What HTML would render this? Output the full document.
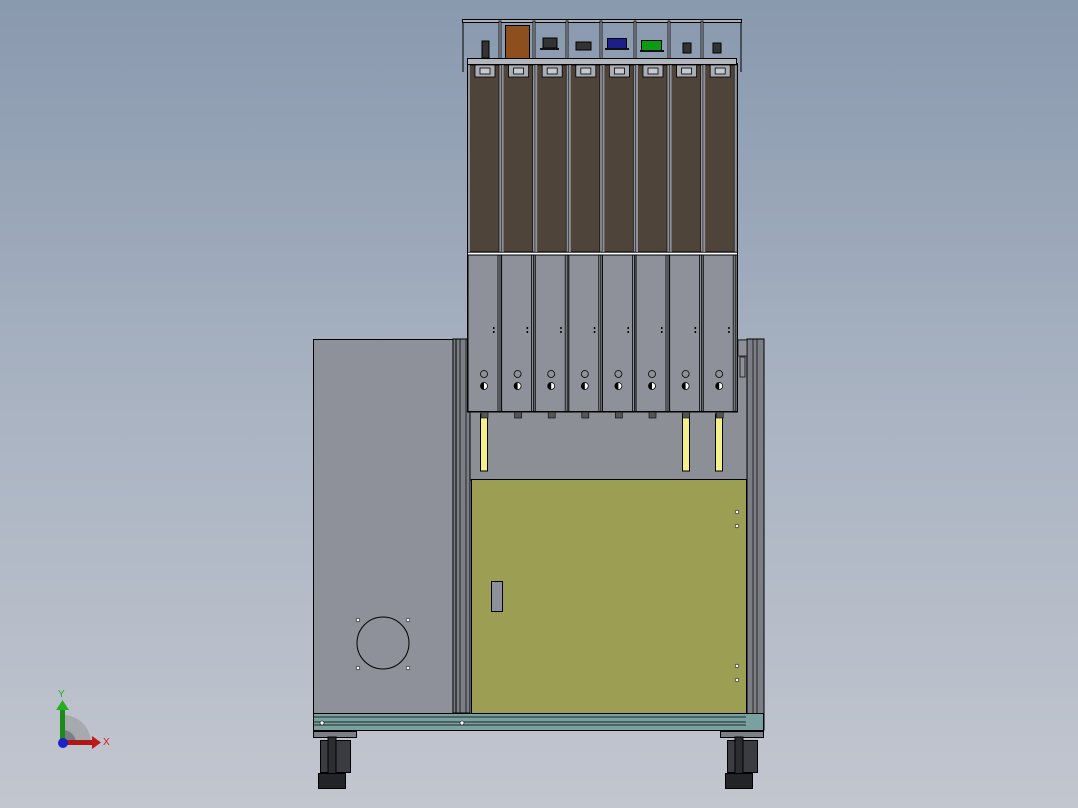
<!DOCTYPE html>
<html><head><meta charset="utf-8"><style>
html,body{margin:0;padding:0}
body{width:1078px;height:808px;overflow:hidden;background:linear-gradient(#8999ae 0%,#a9b3c2 50%,#c2c6cf 100%);font-family:"Liberation Sans",sans-serif}
svg{position:absolute;left:0;top:0}
</style></head><body>
<svg width="1078" height="808" viewBox="0 0 1078 808">
<defs>
<g id="col">
 <rect x="0" y="65" width="34" height="187" fill="#4e4439" stroke="#000" stroke-width="1"/>
 <rect x="0" y="65" width="2" height="187" fill="#8e9199"/>
 <rect x="31" y="65" width="3" height="187" fill="#8e9199" stroke="#000" stroke-width="0.6"/>
 <rect x="7" y="65" width="20" height="12" fill="#a9adb4" stroke="#000" stroke-width="0.8"/>
 <rect x="12" y="68" width="10" height="6" fill="#c6c9ce" stroke="#000" stroke-width="0.8"/>
 <rect x="0" y="255" width="34" height="157" fill="#8e9199" stroke="#000" stroke-width="1"/>
 <line x1="30" y1="255" x2="30" y2="412" stroke="#000" stroke-width="0.8"/>
 <line x1="32" y1="255" x2="32" y2="412" stroke="#000" stroke-width="0.8"/>
 <circle cx="16" cy="374" r="3.5" fill="none" stroke="#000" stroke-width="0.8"/>
 <circle cx="16" cy="386" r="3.5" fill="#fff" stroke="#000" stroke-width="0.8"/>
 <path d="M16 382.5 v7 a3.5 3.5 0 0 1 0 -7z" fill="#000"/>
 <rect x="25" y="327" width="1.5" height="2" fill="#000"/><rect x="25" y="331" width="1.5" height="2" fill="#000"/>
 <rect x="13" y="412" width="7" height="6" fill="#555" stroke="#000" stroke-width="0.6"/>
</g>
</defs>
<!-- left cabinet -->
<rect x="313.5" y="339.5" width="140" height="374" fill="#8e9199" stroke="#000"/>
<circle cx="383" cy="643" r="26" fill="none" stroke="#000"/>
<circle cx="358" cy="620" r="1.8" fill="#fff" stroke="#000" stroke-width=".6"/>
<circle cx="408" cy="620" r="1.8" fill="#fff" stroke="#000" stroke-width=".6"/>
<circle cx="358" cy="668" r="1.8" fill="#fff" stroke="#000" stroke-width=".6"/>
<circle cx="408" cy="668" r="1.8" fill="#fff" stroke="#000" stroke-width=".6"/>
<!-- left post -->
<rect x="453" y="339" width="17" height="374" fill="#7b7e84" stroke="#000"/>
<line x1="456" y1="339" x2="456" y2="713" stroke="#000"/>
<line x1="460" y1="339" x2="460" y2="713" stroke="#000" stroke-width=".7"/>
<line x1="466" y1="339" x2="466" y2="713" stroke="#000" stroke-width=".7"/>
<!-- gray back panel -->
<rect x="470" y="340" width="277" height="140" fill="#8c8f96" stroke="#000"/>
<!-- olive panel -->
<rect x="471.5" y="479.5" width="275" height="234" fill="#9c9e54" stroke="#000"/>
<rect x="491.5" y="581.5" width="11" height="30" fill="#8e9199" stroke="#000"/>
<circle cx="737" cy="512" r="1.8" fill="#fff" stroke="#000" stroke-width=".6"/>
<circle cx="737" cy="526" r="1.8" fill="#fff" stroke="#000" stroke-width=".6"/>
<circle cx="737" cy="666" r="1.8" fill="#fff" stroke="#000" stroke-width=".6"/>
<circle cx="737" cy="680" r="1.8" fill="#fff" stroke="#000" stroke-width=".6"/>
<!-- right post -->
<rect x="747" y="339" width="17" height="391" fill="#7b7e84" stroke="#000"/>
<line x1="753" y1="339" x2="753" y2="730" stroke="#000" stroke-width=".7"/>
<line x1="757" y1="339" x2="757" y2="730" stroke="#000" stroke-width=".7"/>
<rect x="738" y="340" width="9" height="16" fill="#8e9199" stroke="#000" stroke-width=".7"/>
<rect x="740" y="357" width="5" height="20" fill="#8e9199" stroke="#000" stroke-width=".7"/>
<!-- yellow rods -->
<g fill="#f4f08a" stroke="#000">
<rect x="480.5" y="414" width="7" height="57"/>
<rect x="682.5" y="414" width="7" height="57"/>
<rect x="715.5" y="414" width="7" height="57"/>
</g>
<!-- columns -->
<rect x="468" y="253" width="269" height="2" fill="#fff"/>
<rect x="467.5" y="252" width="270" height="160" fill="none" stroke="#000"/>
<use href="#col" x="468"/><use href="#col" x="501.6"/><use href="#col" x="535.2"/><use href="#col" x="568.8"/>
<use href="#col" x="602.4"/><use href="#col" x="636"/><use href="#col" x="669.6"/><use href="#col" x="703.2"/>
<rect x="467.5" y="63.5" width="270" height="348" fill="none" stroke="#000"/>
<!-- top rail -->
<g fill="none" stroke="#000" stroke-width="1">
<path d="M463 72 V20 H741 V72"/>
<rect x="462.5" y="19.5" width="279" height="3" fill="#aab0b8"/>
</g>
<g fill="#aab0b8" stroke="#000" stroke-width=".8">
<rect x="499" y="21" width="2" height="38"/><rect x="533" y="21" width="2" height="38"/><rect x="566" y="21" width="2" height="38"/>
<rect x="600" y="21" width="2" height="38"/><rect x="634" y="21" width="2" height="38"/><rect x="668" y="21" width="2" height="38"/><rect x="701" y="21" width="2" height="38"/>
</g>
<rect x="467.5" y="58.5" width="269" height="6" fill="#b2b6bd" stroke="#000"/>
<!-- top items -->
<rect x="482" y="41" width="7" height="17" fill="#333" stroke="#000"/>
<rect x="505.5" y="25.5" width="24" height="33" fill="#8e4f1f" stroke="#000"/>
<rect x="543" y="38" width="14" height="10" fill="#333" stroke="#000"/>
<rect x="540" y="48" width="19" height="2" fill="#111"/>
<rect x="576" y="42" width="15" height="8" fill="#333" stroke="#000"/>
<rect x="607.5" y="38.5" width="19" height="10" fill="#1a1f8a" stroke="#000"/>
<rect x="605" y="48" width="24" height="2" fill="#111"/>
<rect x="641.5" y="40.5" width="20" height="10" fill="#0c9a14" stroke="#000"/>
<rect x="640" y="50" width="24" height="2" fill="#111"/>
<rect x="683" y="43" width="8" height="10" fill="#333" stroke="#000"/>
<rect x="713" y="43" width="8" height="10" fill="#333" stroke="#000"/>
<!-- base -->
<rect x="313.5" y="713.5" width="450" height="17" fill="#79a1a0" stroke="#000"/>
<line x1="313" y1="717" x2="746" y2="717" stroke="#000" stroke-width=".7"/>
<line x1="313" y1="722" x2="746" y2="722" stroke="#000" stroke-width=".7"/>
<line x1="313" y1="725" x2="746" y2="725" stroke="#000" stroke-width=".7"/>
<circle cx="322" cy="723" r="2" fill="#fff" stroke="#000" stroke-width=".6"/>
<circle cx="462" cy="723" r="2" fill="#fff" stroke="#000" stroke-width=".6"/>
<!-- wheels -->
<g stroke="#000">
<rect x="313.5" y="731.5" width="43" height="6" fill="#7c7f88"/>
<rect x="320.5" y="740.5" width="30" height="32" fill="#3a3c42"/>
<rect x="328" y="737" width="8" height="40" fill="#2b2d31"/>
<rect x="318.5" y="773.5" width="27" height="15" fill="#232427"/>
<rect x="720.5" y="731.5" width="43" height="6" fill="#7c7f88"/>
<rect x="727.5" y="740.5" width="30" height="32" fill="#3a3c42"/>
<rect x="735" y="737" width="8" height="40" fill="#2b2d31"/>
<rect x="725.5" y="773.5" width="27" height="15" fill="#232427"/>
</g>
<!-- triad -->
<path d="M63 715 a28 28 0 0 1 28 28 h-28z" fill="#a6a9ae"/>
<path d="M63 730 a13 13 0 0 1 13 13 h-13z" fill="#7b7e84"/>
<rect x="60" y="708" width="5" height="36" fill="#1a8a1a"/>
<path d="M56 710 L62.5 700 L69 710z" fill="#22b022"/>
<rect x="64" y="740" width="28" height="5" fill="#b01616"/>
<path d="M92 736 L101 742.5 L92 749z" fill="#c01818"/>
<circle cx="63" cy="743" r="5" fill="#1a22c8"/>
<text x="58" y="697" font-size="10" fill="#1ab01a">Y</text>
<text x="103" y="745" font-size="10" fill="#e01818">X</text>
</svg>
</body></html>
